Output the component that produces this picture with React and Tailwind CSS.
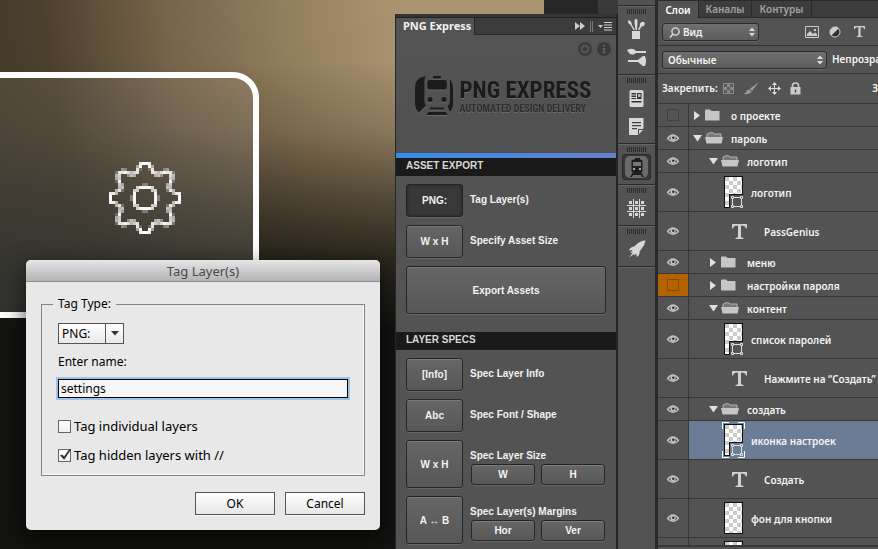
import React from "react";

const GEAR = [
  [10, 0, 0.9], [11, 0, 1],
  [9, 1, 0.5], [10, 1, 0.95],
  [4, 2, 0.4], [5, 2, 0.3], [9, 2, 0.85], [10, 2, 0.2],
  [2, 3, 0.25], [3, 3, 0.85], [4, 3, 0.85], [5, 3, 0.95], [6, 3, 0.8], [7, 3, 0.6], [8, 3, 0.75], [9, 3, 0.85],
  [2, 4, 0.6], [3, 4, 0.75], [6, 4, 0.4], [7, 4, 0.65], [8, 4, 0.55],
  [2, 5, 0.55], [3, 5, 0.7],
  [2, 6, 0.2], [3, 6, 0.95],
  [3, 7, 0.7], [4, 7, 0.5], [11, 7, 0.3],
  [3, 8, 0.6], [4, 8, 0.65], [9, 8, 0.75], [10, 8, 0.95], [11, 8, 0.95],
  [2, 9, 0.6], [3, 9, 0.85], [4, 9, 0.25], [8, 9, 0.75], [9, 9, 0.7],
  [0, 10, 0.9], [1, 10, 0.9], [2, 10, 0.6], [8, 10, 0.95],
  [0, 11, 1], [7, 11, 0.3], [8, 11, 0.95],
];

function PixelGear() {
  return (
    <svg width="72" height="72" viewBox="0 0 24 24" shapeRendering="crispEdges" fill="#fff">
      {GEAR.flatMap(([x, y, o]) =>
        [[x, y], [23 - x, y], [x, 23 - y], [23 - x, 23 - y]].map(([a, b]) => (
          <rect key={a + "-" + b} x={a} y={b} width="1" height="1" opacity={o} />
        ))
      )}
    </svg>
  );
}

function Canvas() {
  return (
    <div className="absolute inset-0 bg-[linear-gradient(to_bottom,transparent_60px,#15130d30_130px,#15140f90_200px,#15140fd8_260px,#121310_330px),linear-gradient(82deg,#3f3528_0%,#4c402d_25%,#74634a_50%,#95805e_78%,#a99371_100%)]">
      <div className="absolute top-[72px] -left-8 flex h-[246px] w-[291px] items-center justify-center rounded-[26px] border-6 border-white bg-[linear-gradient(to_bottom,#ffffff14,#cfd8d828)]">
        <div className="mt-[6px] ml-[63px]">
          <PixelGear />
        </div>
      </div>
    </div>
  );
}

const dialogButton =
  "h-[23px] w-[80px] border border-[#555] bg-linear-to-b from-white to-[#e6e6e6] leading-5 shadow-[0_1px_0_#f8f8f8]";

function Check({ label, checked }) {
  return (
    <label className="flex h-[13px] items-center gap-[3px] text-[13px]">
      <span className="relative flex size-[13px]">
        <input
          type="checkbox"
          defaultChecked={checked}
          className="peer size-[13px] appearance-none border border-[#666] bg-linear-to-b from-white to-[#f0f0f0]"
        />
        <svg className="pointer-events-none absolute inset-0 hidden peer-checked:block" width="13" height="13" viewBox="0 0 13 13">
          <path d="M2 6.5 L4.3 5.6 L6 7.5 L11 0.5 L13 0.5 L6.2 10.8 Z" fill="#333" />
        </svg>
      </span>
      {label}
    </label>
  );
}

function TagDialog() {
  return (
    <form
      onSubmit={(e) => e.preventDefault()}
      className="absolute top-[260px] left-[26px] w-[354px] overflow-hidden rounded-[5px] bg-[#e8e8e8] font-['Noto_Sans','Open_Sans',sans-serif] text-[12px] text-black shadow-[0_8px_24px_#000000b0]"
    >
      <h1 className="h-[22px] border-b border-[#8b8b8b] bg-linear-to-b from-[#e6e6e6] to-[#b4b4b4] text-center text-[13px] leading-[22px] text-[#484848]">
        Tag Layer(s)
      </h1>
      <div className="px-[15px] pt-[14px] pb-[15px]">
        <fieldset className="border border-[#858585] px-4 pb-[13px] shadow-[inset_-1px_-1px_0_#f8f8f8]">
          <legend className="-ml-[5px] px-[5px] leading-4">Tag Type:</legend>
          <div className="relative mt-[11px] flex w-[66px]">
            <select
              aria-label="Tag type"
              className="h-[21px] w-full appearance-none border border-[#555] bg-linear-to-b from-white to-[#e9e9e9] pl-[3px] leading-4"
            >
              <option>PNG:</option>
            </select>
            <span className="pointer-events-none absolute inset-y-0 right-0 flex w-[19px] items-center justify-center border-l border-[#555]">
              <svg width="8" height="5" viewBox="0 0 8 5"><path d="M0 0H8L4 4.5Z" fill="#333" /></svg>
            </span>
          </div>
          <label htmlFor="name" className="mt-[10px] block leading-4">Enter name:</label>
          <input
            id="name"
            defaultValue="settings"
            className="mt-[9px] block h-[19px] w-full border border-black bg-[#f6f6f6] px-[2px] leading-4 shadow-[0_0_0_2px_#9cc4ea] outline-none"
          />
          <div className="mt-[22px] flex flex-col gap-4">
            <Check label="Tag individual layers" />
            <Check label="Tag hidden layers with //" checked />
          </div>
        </fieldset>
        <div className="mt-4 flex justify-end gap-[10px]">
          <button className={dialogButton}>OK</button>
          <button type="button" className={dialogButton}>Cancel</button>
        </div>
      </div>
    </form>
  );
}

const tool =
  "rounded-[3px] border border-[#262626] bg-linear-to-b from-[#666] to-[#575757] shadow-[inset_0_1px_0_#7b7b7b,0_1px_0_#666]";
const pressed = "rounded-[3px] border border-[#222] bg-[#383838] shadow-[inset_0_0_3px_#222,0_1px_0_#666]";

function ToolRow({ sign, label, active }) {
  return (
    <div className="flex items-center gap-[7px]">
      <button className={"h-[33px] w-[57px] shrink-0 " + (active ? pressed : tool)}>{sign}</button>
      <span className="pb-[2px]">{label}</span>
    </div>
  );
}

function SplitRow({ sign, label, parts }) {
  return (
    <div className="flex gap-[7px]">
      <button className={"h-[48px] w-[57px] shrink-0 " + tool}>{sign}</button>
      <div className="flex flex-1 flex-col pt-2">
        <span className="leading-4">{label}</span>
        <div className="flex gap-[6px] pl-px">
          {parts.map((p) => (
            <button key={p} className={"h-[21px] w-[64px] " + tool}>{p}</button>
          ))}
        </div>
      </div>
    </div>
  );
}

function Logo() {
  return (
    <div className="flex items-center justify-center gap-[7px] text-[#1b1b1b] drop-shadow-[0_1px_0_#6a6a6a]">
      <svg width="38" height="40" viewBox="0 0 38 40" fill="#1b1b1b">
        <path d="M11 0.500Q0 1 0 12V28Q0 33 4 36.500L11 29.500Q9.500 28 9.500 25V6Q9.500 2 11 0.500Z" />
        <path d="M34 3Q38 6 38 12V28Q38 33 35 36L32.500 30.500Q35 28 35 25V8Q35 5 34 3Z" />
        <rect x="18" y="0" width="8" height="2.500" rx="0.800" />
        <rect x="12.300" y="4" width="19.500" height="9.500" rx="2" />
        <circle cx="15" cy="23.500" r="2.500" />
        <circle cx="29" cy="23.500" r="2.500" />
        <path d="M15.500 31.500H28.500L29.500 33.500H14.500ZM13.500 36H30.500L32.500 38.500Q31 39 29 39H15Q13 39 11.500 38.500Z" />
      </svg>
      <div className="font-['Roboto_Condensed','Liberation_Sans_Narrow',sans-serif] font-bold whitespace-nowrap">
        <div className="text-[23px] leading-6">PNG EXPRESS</div>
        <div className="text-[10px] leading-[11px] text-[#2e2e2e]">AUTOMATED DESIGN DELIVERY</div>
      </div>
    </div>
  );
}

const sectionHead = "h-[18px] shrink-0 bg-[#1a1a1a] pl-[10px] text-[10px] leading-4 font-bold text-[#d8d8d8]";

function PngPanel() {
  return (
    <section className="relative flex w-[223px] shrink-0 flex-col">
      <div className="flex h-[14px] shrink-0">
        <div className="w-[149px] bg-[#a99371]" />
        <div className="flex-1 bg-[#262626]" />
        <div className="w-5 bg-[#3a3a3a]" />
      </div>
      <div className="flex min-h-0 flex-1 flex-col overflow-hidden border-r-2 border-l border-[#262626] bg-[#535353] font-['Liberation_Sans',Arial,sans-serif] text-[10px] font-bold text-[#f2f2f2]">
        <div className="h-1 shrink-0 border-b border-[#222] bg-[#353535]" />
        <div className="flex h-[17px] shrink-0 bg-[#3c3c3c] font-['Noto_Sans',sans-serif] text-[11px]">
          <h2 className="w-[79px] border-r border-[#282828] bg-[#535353] pl-[7px] leading-4 whitespace-nowrap">PNG Express</h2>
          <div className="flex flex-1 items-center justify-end gap-[5px] border-b border-[#282828] pr-1">
            <svg width="10" height="8" viewBox="0 0 10 8" fill="#ccc"><path d="M0 0L5 4L0 8ZM5 0L10 4L5 8Z" /></svg>
            <span className="h-[11px] w-[3px] border-x border-[#777]" />
            <svg width="14" height="9" viewBox="0 0 14 9" fill="#ccc"><path d="M0 3H5L2.500 6ZM6 0H14V1H6ZM6 2.500H14V3.500H6ZM6 5H14V6H6ZM6 7.500H14V8.500H6Z" /></svg>
          </div>
        </div>
        <div className="h-[123px] shrink-0 border-b-[5px] border-[#3f8ae6] bg-linear-to-b from-[#545454] to-[#505050] [border-image:linear-gradient(to_right,#338eee,#6680cc)_1]">
          <div className="flex justify-end gap-[5px] pt-[7px] pr-[5px]">
            <button aria-label="Settings">
              <svg width="14" height="14" viewBox="0 0 14 14"><circle cx="7" cy="7" r="7" fill="#3b3b3b" /><circle cx="7" cy="7" r="3" fill="none" stroke="#585858" strokeWidth="1.500" /><circle cx="7" cy="7" r="4" fill="none" stroke="#585858" strokeWidth="1.500" strokeDasharray="1.600 1.540" /></svg>
            </button>
            <button aria-label="About">
              <svg width="14" height="14" viewBox="0 0 14 14"><circle cx="7" cy="7" r="7" fill="#3b3b3b" /><path d="M6 3H8V5H6ZM5 6H8V10H9V11H5V10H6V7H5Z" fill="#5c5c5c" /></svg>
            </button>
          </div>
          <div className="mt-5 pr-[6px]"><Logo /></div>
        </div>
        <h3 className={sectionHead}>ASSET EXPORT</h3>
        <div className="flex flex-col gap-2 px-[10px] pt-2 pb-[18px]">
          <ToolRow sign="PNG:" label="Tag Layer(s)" active />
          <ToolRow sign="W x H" label="Specify Asset Size" />
          <button className={"h-[48px] w-full " + tool}>Export Assets</button>
        </div>
        <h3 className={sectionHead}>LAYER SPECS</h3>
        <div className="flex flex-col gap-2 px-[10px] pt-2">
          <ToolRow sign="[Info]" label="Spec Layer Info" />
          <ToolRow sign="Abc" label="Spec Font / Shape" />
          <SplitRow sign="W x H" label="Spec Layer Size" parts={["W", "H"]} />
          <SplitRow sign="A ↔ B" label="Spec Layer(s) Margins" parts={["Hor", "Ver"]} />
        </div>
      </div>
    </section>
  );
}

const dockIcons = {
  brushes: (
    <svg width="20" height="21" viewBox="0 0 20 21" fill="#d8d8d8">
      <path d="M5 12H13V20H5ZM6.500 11L3.500 6Q0 4 1.500 1Q5 2.500 4.800 5.500L8 11ZM8.500 11L7.500 4L7.500 1Q9 -1 10.500 1V4L10 11ZM11 11L13 6.500Q12 4 15 3Q16 2 18 4L17 7L14.500 7.500L12.500 11Z" />
    </svg>
  ),
  presets: (
    <svg width="20" height="18" viewBox="0 0 20 18" fill="#d8d8d8">
      <path d="M0 2Q6 -1 9 3H19V5H9Q5 8 2 5ZM1 12H11Q13 10 16 8H18Q20 13 18 18H16Q13 16 11 14H1Z" />
    </svg>
  ),
  info: (
    <svg width="15" height="17" viewBox="0 0 15 17">
      <rect x="0.500" width="14" height="17" rx="1.500" fill="#d8d8d8" />
      <path d="M2.500 3H7V4.500H2.500ZM2.500 5.500H7V7H2.500ZM2.500 8H7V9H2.500ZM8 3H12.500V9H8ZM2.500 11H12.500V12.500H2.500Z" fill="#333" />
      <path d="M9 4H11.500V7H9Z" fill="#bbb" />
    </svg>
  ),
  notes: (
    <svg width="15" height="17" viewBox="0 0 15 17">
      <path d="M0 0H14.500V10L9 17H0Z" fill="#d8d8d8" />
      <path d="M3 4H12V5.300H3ZM3 7H12V8.300H3ZM3 10H8V11.300H3ZM9 17V11H14Z" fill="#444" />
      <path d="M10 16V12H14Z" fill="#d8d8d8" />
    </svg>
  ),
  train: (
    <svg width="14" height="19" viewBox="0 0 14 19">
      <rect x="5" y="0" width="5" height="2" fill="#1d1d1d" />
      <rect x="1.500" y="1.500" width="11" height="13" rx="2" fill="#1d1d1d" />
      <rect x="3" y="4" width="8" height="4" fill="#777" />
      <circle cx="4" cy="11" r="1.200" fill="#aaa" /><circle cx="10" cy="11" r="1.200" fill="#aaa" />
      <path d="M3 14L0 19H2L3 17H11L12 19H14L11 14Z" fill="#1d1d1d" />
    </svg>
  ),
  grid: (
    <svg width="19" height="19" viewBox="0 0 19 19" fill="#d8d8d8" shapeRendering="crispEdges">
      <path d="M2 2H5V5H2ZM8 2H11V5H8ZM14 2H17V5H14ZM2 8H5V11H2ZM8 8H11V11H8ZM14 8H17V11H14ZM2 14H5V17H2ZM8 14H11V17H8ZM14 14H17V17H14Z" />
      <path d="M6 0H7V19H6ZM12 0H13V19H12ZM0 6H19V7H0ZM0 12H19V13H0Z" />
    </svg>
  ),
  rocket: (
    <svg width="18" height="18" viewBox="0 0 18 18" fill="#d8d8d8">
      <path d="M17.500 0.500Q12 0.500 8 5L6 6.500Q2 7 1 10.500L4.500 10L2.500 13L5 12.500L1 17.500L6 14L6.500 15.500L8 13.500L9 17Q12 15 11.500 11.500L13 9.500Q17 5 17.500 0.500Z" />
    </svg>
  ),
};

function DockGroup({ names }) {
  return (
    <div className="flex flex-col items-center border-b border-[#282828] pt-[3px] pb-[3px] shadow-[0_1px_0_#666]">
      <div className="mb-px h-[5px] w-[20px] bg-[repeating-linear-gradient(to_right,#2c2c2c_0_1px,#535353_1px_2px)]" />
      {names.map((n) => (
        <button
          key={n}
          aria-label={n}
          className={
            n === "train"
              ? "my-px flex h-[26px] w-[29px] items-center justify-center rounded-[3px] border border-[#292929] bg-[#383838]"
              : "flex h-[28px] w-[29px] items-center justify-center"
          }
        >
          {n === "train" ? (
            <span className="flex h-[22px] w-[23px] items-center justify-center rounded-[5px] bg-[#6b6b6b]">{dockIcons[n]}</span>
          ) : (
            dockIcons[n]
          )}
        </button>
      ))}
    </div>
  );
}

function Dock() {
  return (
    <nav className="w-[37px] shrink-0 bg-[#535353]">
      <div className="h-[6px] border-b border-[#282828] shadow-[0_1px_0_#666]" />
      <DockGroup names={["brushes", "presets"]} />
      <DockGroup names={["info", "notes"]} />
      <DockGroup names={["train"]} />
      <DockGroup names={["grid"]} />
      <DockGroup names={["rocket"]} />
    </nav>
  );
}

function Eye() {
  return (
    <svg width="12" height="10" viewBox="0 0 12 10">
      <path d="M0.500 5.500Q6 -1.500 11.500 5.500Q6 11 0.500 5.500Z" fill="none" stroke="#c4c4c4" strokeWidth="1.300" />
      <circle cx="6" cy="5" r="2.600" fill="#c4c4c4" />
      <circle cx="6.300" cy="4.800" r="1.200" fill="#2a2a2a" />
    </svg>
  );
}

function Folder({ open }) {
  return open ? (
    <svg width="18" height="12" viewBox="0 0 18 12">
      <path d="M2 5V2H3L4 0.800H8L9 2H16V5" fill="#777" stroke="#b5b5b5" />
      <path d="M0 5H18L16.500 11.500H1.500Z" fill="#c6c6c6" />
    </svg>
  ) : (
    <svg width="15" height="12" viewBox="0 0 15 12">
      <path d="M0 1.500Q0 0.500 1 0.500H5L6.500 2H14.500V11.500H0Z" fill="#c6c6c6" />
    </svg>
  );
}

function TypeGlyph({ className }) {
  return (
    <svg className={className} viewBox="0 0 15 15" fill="#d0d0d0">
      <path d="M0 0H15V4.500H14Q13.500 1.800 11 1.800H9V12.500Q9 13.800 11.500 14V15H3.500V14Q6 13.800 6 12.500V1.800H4Q1.500 1.800 1 4.500H0Z" />
    </svg>
  );
}

function Thumb({ shape, selected }) {
  return (
    <span className="relative block h-[32px] w-[19px] shrink-0 border border-[#111] bg-white bg-[conic-gradient(#fff_25%,#ccc_0_50%,#fff_0_75%,#ccc_0)] bg-size-[8px_8px]">
      {shape && (
        <span className={"absolute -right-px -bottom-px flex h-[14px] w-[14px] items-end justify-end border-t border-l border-[#111] " + (selected ? "bg-[#6b7c95]" : "bg-[#535353]")}>
          <svg width="12" height="12" viewBox="0 0 12 12" fill="none" stroke="#ddd">
            <path d="M3 1.500H9M3 10.500H9M1.500 3V9M10.500 3V9" />
            <path d="M0.500 0.500H2.500V2.500H0.500ZM9.500 0.500H11.500V2.500H9.500ZM0.500 9.500H2.500V11.500H0.500ZM9.500 9.500H11.500V11.500H9.500Z" />
          </svg>
        </span>
      )}
      {selected && (
        <svg className="absolute -top-[3px] -left-[3px]" width="23" height="36" viewBox="0 0 23 36" fill="none" stroke="#fff">
          <path d="M0.500 7V0.500H7M16 0.500H22.500V7M22.500 29V35.500H16M7 35.500H0.500V29" />
        </svg>
      )}
    </span>
  );
}

const LAYERS = [
  { kind: "closed", name: "о проекте", hidden: true },
  { kind: "open", name: "пароль" },
  { kind: "open", name: "логотип", deep: true },
  { kind: "shape", name: "логотип" },
  { kind: "text", name: "PassGenius" },
  { kind: "closed", name: "меню", deep: true },
  { kind: "closed", name: "настройки пароля", deep: true, hidden: true, orange: true },
  { kind: "open", name: "контент", deep: true },
  { kind: "shape", name: "список паролей" },
  { kind: "text", name: "Нажмите на “Создать”" },
  { kind: "open", name: "создать", deep: true },
  { kind: "shape", name: "иконка настроек", selected: true },
  { kind: "text", name: "Создать" },
  { kind: "fill", name: "фон для кнопки" },
  { kind: "fill", name: "" },
];

function LayerRow({ layer }) {
  const group = layer.kind === "open" || layer.kind === "closed";
  return (
    <li className={"flex shrink-0 border-b border-[#383838] " + (group ? "h-[23px]" : "h-[39px]")}>
      <button
        aria-label="Visibility"
        className={"flex w-[31px] shrink-0 items-center justify-center border-r border-[#383838] " + (layer.orange ? "bg-[#b26200]" : "")}
      >
        {layer.hidden ? (
          <span className={"size-3 border " + (layer.orange ? "border-[#8a4c00]" : "border-[#404040]")} />
        ) : (
          layer.name && <Eye />
        )}
      </button>
      <div className={"flex min-w-0 flex-1 items-center whitespace-nowrap " + (layer.selected ? "bg-[#6b7c95]" : "")}>
        {group && (
          <div className={"flex items-center " + (layer.deep ? "pl-[18px]" : "pl-[2px]")}>
            <span className="flex w-[12px] justify-center">
              {layer.kind === "open" ? (
                <svg width="9" height="7" viewBox="0 0 9 7"><path d="M0 0H9L4.500 6.500Z" fill="#e0e0e0" /></svg>
              ) : (
                <svg width="7" height="9" viewBox="0 0 7 9"><path d="M0 0V9L6 4.500Z" fill="#e0e0e0" /></svg>
              )}
            </span>
            <span className="flex w-[28px] pl-[2px]"><Folder open={layer.kind === "open"} /></span>
          </div>
        )}
        {layer.kind === "text" && (
          <span className="w-[75px] shrink-0 pl-[43px]"><TypeGlyph className="size-[15px]" /></span>
        )}
        {(layer.kind === "shape" || layer.kind === "fill") && (
          <span className="w-[62px] shrink-0 pl-[35px]">
            <Thumb shape={layer.kind === "shape"} selected={layer.selected} />
          </span>
        )}
        <span className="pt-[2px]">{layer.name}</span>
      </div>
    </li>
  );
}

function Spinner() {
  return (
    <svg className="pointer-events-none absolute top-1 right-1" width="6" height="10" viewBox="0 0 6 10" fill="#ddd">
      <path d="M0 4L3 0.500L6 4ZM0 6L3 9.500L6 6Z" />
    </svg>
  );
}

const dropDown =
  "h-[18px] w-full appearance-none rounded-[3px] border border-[#2c2c2c] bg-linear-to-b from-[#707070] to-[#5c5c5c] leading-4 shadow-[0_1px_0_#666]";

function LayersPanel() {
  return (
    <section className="flex w-[223px] shrink-0 flex-col border-l-[3px] border-[#2a2a2a] bg-[#535353] font-['Noto_Sans','Open_Sans',sans-serif] text-[10px] font-semibold text-[#f4f4f4]">
      <div className="flex h-[18px] shrink-0 bg-[#3c3c3c] leading-4 text-[#a2a2a2]">
        <button className="w-[41px] border-t border-r border-[#2a2a2a] bg-[#535353] text-white">Слои</button>
        <button className="w-[53px] border border-l-0 border-[#2a2a2a]">Каналы</button>
        <button className="w-[60px] border border-l-0 border-[#2a2a2a]">Контуры</button>
        <span className="flex-1 border-y border-[#2a2a2a]" />
      </div>
      <div className="flex h-[28px] shrink-0 items-center border-b border-[#333] pl-1">
        <div className="relative flex w-[97px]">
          <select aria-label="Filter" className={dropDown + " pl-[20px]"}><option>Вид</option></select>
          <svg className="pointer-events-none absolute top-1 left-[7px]" width="11" height="11" viewBox="0 0 11 11" fill="none" stroke="#ddd" strokeWidth="1.400">
            <circle cx="6.500" cy="4.500" r="3.600" /><path d="M4 7L1 10.500" />
          </svg>
          <Spinner />
        </div>
        <button aria-label="Pixel layers" className="ml-[46px]">
          <svg width="14" height="12" viewBox="0 0 14 12"><path d="M0.500 0.500H13.500V11.500H0.500Z" fill="none" stroke="#ccc" /><path d="M2 10V8L5 5L8 8L10 6.500L12 8V10ZM9 3H11V5H9Z" fill="#ccc" /></svg>
        </button>
        <button aria-label="Adjustment layers" className="ml-[10px]">
          <svg width="12" height="12" viewBox="0 0 12 12"><circle cx="6" cy="6" r="5" fill="#333" stroke="#ccc" /><path d="M9.800 2.200A5.400 5.400 0 0 0 2.200 9.800Z" fill="#ccc" /></svg>
        </button>
        <button aria-label="Type layers" className="ml-[13px]"><TypeGlyph className="size-[11px]" /></button>
      </div>
      <div className="flex h-[28px] shrink-0 items-center overflow-hidden border-b border-[#333] pl-1 whitespace-nowrap">
        <div className="relative flex w-[165px] shrink-0">
          <select aria-label="Blend mode" className={dropDown + " pl-[5px]"}><option>Обычные</option></select>
          <Spinner />
        </div>
        <span className="ml-[5px]">Непрозра</span>
      </div>
      <div className="flex h-[30px] shrink-0 items-center overflow-hidden border-b border-[#383838] pl-1 whitespace-nowrap">
        <span className="w-[61px]">Закрепить:</span>
        <div className="flex flex-1 items-center gap-[9px]">
          <button aria-label="Lock transparency">
            <svg width="11" height="11" viewBox="0 0 11 11" shapeRendering="crispEdges"><path d="M0 0H11V11H0Z" fill="#8a8a8a" /><path d="M1 1H4V4H1ZM7 1H10V4H7ZM4 4H7V7H4ZM1 7H4V10H1ZM7 7H10V10H7Z" fill="#5a5a5a" /></svg>
          </button>
          <button aria-label="Lock pixels">
            <svg width="16" height="13" viewBox="0 0 16 13" fill="#999"><path d="M16 0L9 9L6.500 7ZM6 7.500L8.500 9.500Q7 13 0 12Q3 11.500 3.500 9Q4.500 7.500 6 7.500Z" /></svg>
          </button>
          <button aria-label="Lock position">
            <svg width="13" height="13" viewBox="0 0 13 13" fill="#ddd"><path d="M6.500 0L9 3H7V6H10V4L13 6.500L10 9V7H7V10H9L6.500 13L4 10H6V7H3V9L0 6.500L3 4V6H6V3H4Z" /></svg>
          </button>
          <button aria-label="Lock all">
            <svg width="11" height="13" viewBox="0 0 11 13"><path d="M2.500 6V3.500Q2.500 1 5.500 1Q8.500 1 8.500 3.500V6" fill="none" stroke="#ccc" strokeWidth="1.600" /><path d="M0.500 5H10.500V12.500H0.500Z" fill="#ccc" /><path d="M4.800 7.500H6.200V10.500H4.800Z" fill="#444" /></svg>
          </button>
        </div>
        <span>З</span>
      </div>
      <ul className="flex min-h-0 flex-1 flex-col overflow-hidden">
        {LAYERS.map((l, i) => <LayerRow key={i} layer={l} />)}
      </ul>
      <div className="h-1 shrink-0 border-t-2 border-[#383838]" />
    </section>
  );
}

export default function App() {
  return (
    <main className="flex h-screen overflow-hidden bg-[#262626]">
      <div className="relative min-w-0 flex-1">
        <Canvas />
        <TagDialog />
      </div>
      <PngPanel />
      <Dock />
      <LayersPanel />
    </main>
  );
}
